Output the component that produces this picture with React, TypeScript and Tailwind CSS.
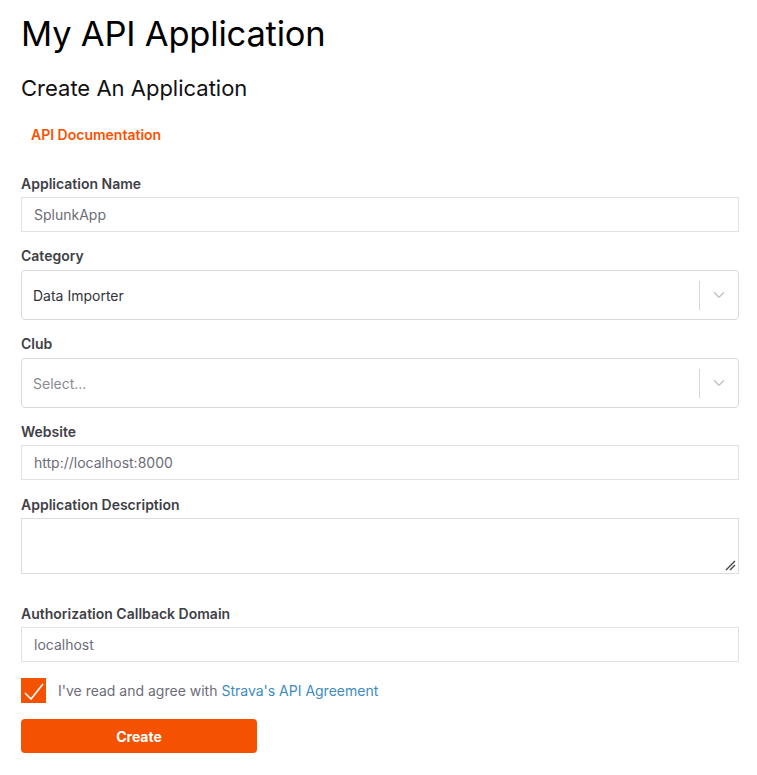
import { ChevronDown } from "lucide-react";

const font = { fontFamily: "Inter, 'Noto Sans', sans-serif" };

function Label({ children, gap = "mb-[3px]" }: { children: React.ReactNode; gap?: string }) {
  return <label className={"block text-[14px] leading-[20px] font-semibold text-[#3f3f46] " + gap}>{children}</label>;
}

function TextInput({ value }: { value: string }) {
  return (
    <div className="h-[35px] border border-[#e1e1e8] bg-white flex items-center px-[12px] text-[14px] text-[#6d6d78]">
      {value}
    </div>
  );
}

function Select({ value, placeholder }: { value?: string; placeholder?: string }) {
  return (
    <div className="h-[50px] border border-[#d9d9de] rounded-[4px] bg-white flex items-center">
      <div className={"flex-1 pl-[11px] text-[14px] " + (value ? "text-[#333338]" : "text-[#8a8a92]")}>
        {value ?? placeholder}
      </div>
      <div className="w-px h-[29px] bg-[#d6d6da]" />
      <div className="w-[38px] flex items-center justify-center text-[#c4c4c8]">
        <ChevronDown size={18} strokeWidth={2} />
      </div>
    </div>
  );
}

export default function App() {
  return (
    <div className="bg-white min-h-screen pl-[21px] pr-[18px] pt-[14px] pb-6" style={font}>
      <h1 className="text-[34.5px] leading-[40px] font-normal text-black tracking-[-0.2px]">My API Application</h1>
      <h2 className="mt-[20px] text-[22px] leading-[28px] font-normal text-[#111]">Create An Application</h2>
      <a className="block mt-[23px] ml-[10px] text-[14px] leading-[20px] font-semibold text-[#fc5200]">API Documentation</a>

      <div className="mt-[29px]">
        <Label>Application Name</Label>
        <TextInput value="SplunkApp" />
      </div>

      <div className="mt-[14px]">
        <Label gap="mb-[4px]">Category</Label>
        <Select value="Data Importer" />
      </div>

      <div className="mt-[14px]">
        <Label gap="mb-[4px]">Club</Label>
        <Select placeholder="Select..." />
      </div>

      <div className="mt-[14px]">
        <Label>Website</Label>
        <TextInput value="http://localhost:8000" />
      </div>

      <div className="mt-[15px]">
        <Label>Application Description</Label>
        <div className="relative h-[56px] border border-[#dcdcd8] bg-white">
          <svg className="absolute right-[2px] bottom-[2px]" width="12" height="12" viewBox="0 0 12 12">
            <path d="M11 2 L2 11 M11 6 L6 11" stroke="#444" strokeWidth="1.4" fill="none" />
          </svg>
        </div>
      </div>

      <div className="mt-[30px]">
        <Label>Authorization Callback Domain</Label>
        <TextInput value="localhost" />
      </div>

      <div className="mt-[16px] flex items-center">
        <div className="w-[25px] h-[25px] bg-[#f45100] flex items-center justify-center">
          <svg width="22" height="22" viewBox="0 0 22 22">
            <path d="M2 13 L8 19 L20 4" stroke="white" strokeWidth="1.6" fill="none" />
          </svg>
        </div>
        <span className="ml-[12px] text-[14px] text-[#6d6d78]">
          I've read and agree with <a className="text-[#3d8cc0]">Strava's API Agreement</a>
        </span>
      </div>

      <button className="mt-[16px] w-[236px] h-[34px] rounded-[4px] bg-[#f45100] text-white text-[14px] font-bold">
        Create
      </button>
    </div>
  );
}
